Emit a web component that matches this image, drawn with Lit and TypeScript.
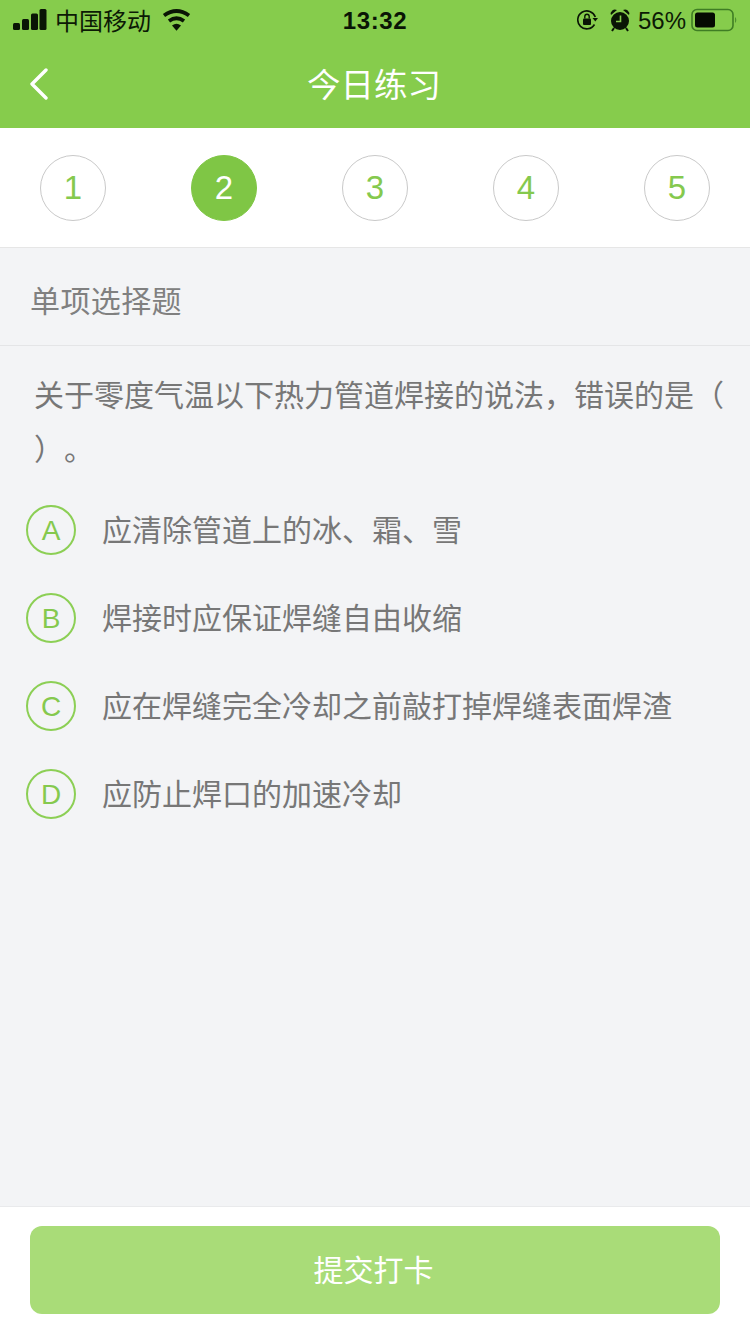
import { LitElement, html, css } from "lit";
import { customElement } from "lit/decorators.js";

@customElement("app-root")
export class AppRoot extends LitElement {
  static styles = css`
    :host {
      display: flex;
      flex-direction: column;
      width: 750px;
      height: 1334px;
      overflow: hidden;
      background: #f3f4f6;
      font-family: "Liberation Sans", "Noto Sans CJK SC", sans-serif;
      color: #7a7a7a;
      text-spacing-trim: space-all;
    }
    .top { background: #86cc4c; height: 128px; flex: none; display: flex; flex-direction: column; }
    .status {
      height: 40px;
      display: grid;
      grid-template-columns: 1fr auto 1fr;
      align-items: center;
      color: #0c1a05;
      padding: 0 13px;
    }
    .status-left, .status-right { display: flex; align-items: center; }
    .status-right { justify-content: flex-end; }
    .carrier { font-size: 24px; margin-left: 8px; margin-right: 11px; padding-bottom: 2px; }
    .time { font-size: 24px; font-weight: 700; letter-spacing: 0.6px; color: #0a1505; padding-top: 2px; }
    .pct { font-size: 24px; margin-left: 7px; margin-right: 5px; padding-top: 2px; }
    .alarm { margin-left: 11px; }
    .nav { flex: 1; position: relative; display: flex; align-items: center; justify-content: center; padding: 0 2px 4px 0; }
    .nav-title { color: #fff; font-size: 33.5px; }
    .back { position: absolute; left: 29px; top: 28px; }
    .steps {
      flex: none;
      background: #fff;
      border-bottom: 1px solid #e6e6e6;
      display: flex;
      justify-content: space-between;
      align-items: flex-start;
      padding: 27px 40px 0;
      box-sizing: border-box;
      height: 120px;
    }
    .step {
      width: 66px;
      height: 66px;
      box-sizing: border-box;
      border: 1px solid #c9c9c9;
      border-radius: 50%;
      display: flex;
      align-items: center;
      justify-content: center;
      font-size: 33px;
      color: #85c94e;
    }
    .step.active { background: #7fc645; border-color: #7fc645; color: #fff; }
    .type {
      flex: none;
      height: 98px;
      box-sizing: border-box;
      border-bottom: 1px solid #e4e5e7;
      display: flex;
      align-items: center;
      padding: 4px 0 0 30px;
      font-size: 30px;
      letter-spacing: 0.4px;
      color: #808080;
    }
    .content { flex: 1; display: flex; flex-direction: column; }
    .question {
      padding: 23px 0 0 34px;
      font-size: 30px;
      line-height: 54px;
      white-space: nowrap;
      color: #777;
    }
    .options { display: flex; flex-direction: column; padding: 9px 0 0 26px; }
    .option { display: flex; align-items: center; height: 88px; gap: 26px; font-size: 30px; color: #777; }
    .option span { padding-bottom: 4px; }
    .badge {
      width: 50px;
      height: 50px;
      flex: none;
      box-sizing: border-box;
      border: 2px solid #8ccf55;
      border-radius: 50%;
      display: flex;
      align-items: center;
      justify-content: center;
      padding-top: 2px;
      font-size: 28px;
      color: #85c94e;
    }
    .footer {
      flex: none;
      height: 128px;
      box-sizing: border-box;
      background: #fff;
      border-top: 1px solid #e9eaec;
      padding: 19px 30px 0;
    }
    .submit {
      height: 88px;
      box-sizing: border-box;
      padding: 0 3px 4px 0;
      border-radius: 12px;
      background: #a9dc78;
      color: #fff;
      font-size: 30px;
      display: flex;
      align-items: center;
      justify-content: center;
    }
  `;

  render() {
    const steps = [1, 2, 3, 4, 5];
    const options = [
      ["A", "应清除管道上的冰、霜、雪"],
      ["B", "焊接时应保证焊缝自由收缩"],
      ["C", "应在焊缝完全冷却之前敲打掉焊缝表面焊渣"],
      ["D", "应防止焊口的加速冷却"],
    ];
    return html`
      <div class="top">
        <div class="status">
          <div class="status-left">
            <svg width="34" height="22" viewBox="0 0 34 22" fill="#0a1505">
              <rect x="0" y="14" width="7" height="7" rx="1.5"/>
              <rect x="9" y="10" width="7" height="11" rx="1.5"/>
              <rect x="18" y="4.5" width="7" height="16.5" rx="1.5"/>
              <rect x="26.5" y="0" width="7" height="21" rx="1.5"/>
            </svg>
            <span class="carrier">中国移动</span>
            <svg width="30" height="22" viewBox="0 0 30 22" fill="none" stroke="#0a1505" stroke-width="3.8">
              <path d="M2 6.5 Q14.5 -2.5 27 6.5"/>
              <path d="M7 12 Q14.5 6.5 22 12"/>
              <path d="M14.5 21.8 L10 16.5 Q14.5 13 19 16.5 Z" fill="#0a1505" stroke="none"/>
            </svg>
          </div>
          <div class="time">13:32</div>
          <div class="status-right">
            <svg width="21" height="22" viewBox="0 0 21 22" fill="none">
              <path d="M17.5 15.5 A9 9 0 1 1 18.3 8" stroke="#0a1505" stroke-width="1.6"/>
              <path d="M15.5 9 L21 9 L18.3 12.5 Z" fill="#0a1505"/>
              <rect x="6" y="9.5" width="8" height="6.5" rx="1" fill="#0a1505"/>
              <path d="M7.8 9.5 V7.5 A2.2 2.2 0 0 1 12.2 7.5 V9.5" stroke="#0a1505" stroke-width="1.4"/>
            </svg>
            <svg class="alarm" width="22" height="24" viewBox="0 0 22 24" fill="#0a1505">
              <circle cx="11" cy="13" r="9"/>
              <path d="M2 7 A4.2 4.2 0 0 1 8 2 Z M20 7 A4.2 4.2 0 0 0 14 2 Z"/>
              <path d="M5 20 L3 23 M17 20 L19 23" stroke="#0a1505" stroke-width="2"/>
              <path d="M11.5 7.5 V13.5 H7" fill="none" stroke="#86cc4c" stroke-width="1.6"/>
            </svg>
            <span class="pct">56%</span>
            <svg width="46" height="24" viewBox="0 0 46 24" fill="none">
              <rect x="1" y="1.5" width="41" height="21" rx="5" stroke="#3f7d24" stroke-width="1.6"/>
              <rect x="4" y="4.5" width="20" height="15" rx="2.5" fill="#050a02"/>
              <path d="M44 9 A4 4 0 0 1 44 15 Z" fill="#4f8f30"/>
            </svg>
          </div>
        </div>
        <div class="nav">
          <svg class="back" width="20" height="32" viewBox="0 0 20 32" fill="none" stroke="#fff" stroke-width="3.4" stroke-linecap="round" stroke-linejoin="round">
            <path d="M17 2 L3 16 L17 30"/>
          </svg>
          <span class="nav-title">今日练习</span>
        </div>
      </div>
      <div class="steps">
        ${steps.map((n) => html`<div class="step ${n === 2 ? "active" : ""}">${n}</div>`)}
      </div>
      <div class="content">
        <div class="type">单项选择题</div>
        <div class="question">关于零度气温以下热力管道焊接的说法，错误的是（<br />）。</div>
        <div class="options">
          ${options.map(
            ([k, t]) => html`<div class="option"><div class="badge">${k}</div><span>${t}</span></div>`
          )}
        </div>
      </div>
      <div class="footer"><div class="submit">提交打卡</div></div>
    `;
  }
}
